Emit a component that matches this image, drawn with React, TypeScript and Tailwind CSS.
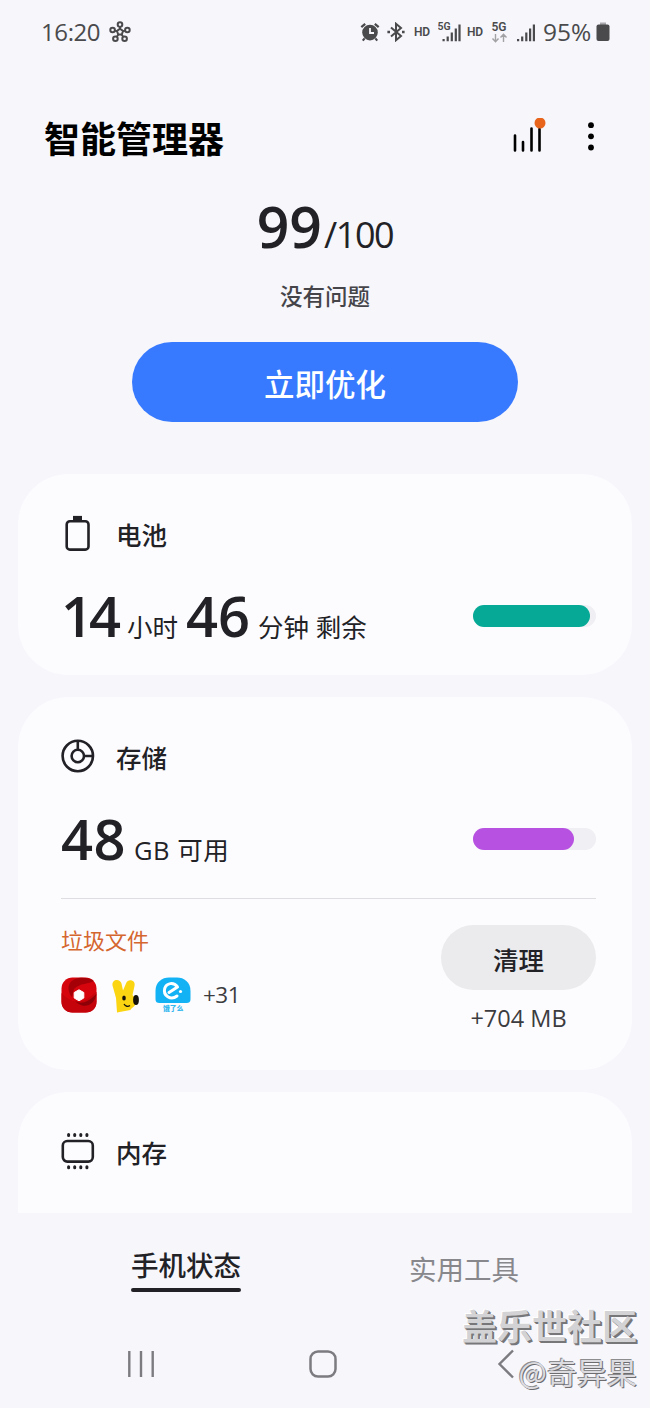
import type { ReactNode } from "react";

function StatusBar() {
  return (
    <div className="flex h-16 items-center pl-[41px] text-[#4a4a4c]">
      <span className="w-[60px] text-[24px] leading-none tracking-[-0.4px]">16:20</span>
      <svg className="ml-2 h-[22px] w-[22px]" viewBox="0 0 22 22" fill="none" stroke="currentColor" strokeWidth="2">
        <path d="M11 7.800l3 2.200-1.200 3.600H9.200L8 10z" />
        <circle cx="11" cy="3.600" r="2.300" />
        <circle cx="3.600" cy="9" r="2.300" />
        <circle cx="18.400" cy="9" r="2.300" />
        <circle cx="6.400" cy="17.800" r="2.300" />
        <circle cx="15.600" cy="17.800" r="2.300" />
        <path d="M11 5.500v2.500M5.500 9.600l3 .8M16.500 9.600l-3 .8M7.600 16l1.800-2.500M14.400 16l-1.800-2.500" />
      </svg>
      <svg className="ml-[229px] h-[20px] w-[20px]" viewBox="0 0 20 20" fill="none">
        <circle cx="10" cy="10.600" r="7.800" fill="currentColor" />
        <path d="M10 6v5h4" stroke="#f6f6fb" strokeWidth="1.800" />
        <path d="M1.300 5.200 5.200 1.800M18.700 5.200 14.800 1.800M4.600 16.400l-1.800 2.200M15.400 16.400l1.800 2.200" stroke="currentColor" strokeWidth="2.200" />
      </svg>
      <svg className="ml-[7px] h-[20px] w-[18px]" viewBox="0 0 18 20" fill="none" stroke="currentColor" strokeWidth="2">
        <path d="M4 5.400l10 8.600-5 4.200V1.800l5 4.200-10 8.600" />
        <path d="M.4 10h2.600M15 10h2.600" strokeWidth="2.600" />
      </svg>
      <span className="ml-[9px] w-[17px] font-[Roboto,sans-serif] text-[12px] leading-none font-semibold tracking-[-0.3px]">HD</span>
      <svg className="ml-[7px] h-[24px] w-[24px] font-[Roboto,sans-serif]" viewBox="0 0 24 24" fill="currentColor">
        <text x="-0.500" y="9.500" fontSize="10.500" fontWeight="600">5G</text>
        <path d="M4.500 19H6.700v2.300H4.500zM8.600 16.500h2.200v4.800H8.600zM12.700 12.500h2.200v8.800h-2.200zM16.700 8.500h2.200v12.800h-2.200zM20.400 4.500h2.200v16.800h-2.200z" />
      </svg>
      <span className="ml-[5px] w-[17px] font-[Roboto,sans-serif] text-[12px] leading-none font-semibold tracking-[-0.3px]">HD</span>
      <svg className="ml-[7px] h-[24px] w-[17px] font-[Roboto,sans-serif]" viewBox="0 0 17 24" fill="currentColor">
        <text x="0.500" y="11" fontSize="12" fontWeight="600">5G</text>
        <path d="M4.500 14v7.500M1.500 18.500l3 3.200 3-3.200M12.500 22v-7.500M9.500 17.500l3-3.200 3 3.200" fill="none" stroke="#a2a2a5" strokeWidth="1.400" />
      </svg>
      <svg className="ml-[9px] h-[24px] w-[19px]" viewBox="0 0 19 24" fill="currentColor">
        <path d="M0 19h2.200v2.300H0zM4.100 16.500h2.200v4.800H4.100zM8.200 12.500h2.200v8.800H8.200zM12 8.500h2.200v12.800H12zM15.800 4.500H18v16.800h-2.200z" />
      </svg>
      <span className="ml-[7px] w-[49px] text-[24.500px] leading-none">95%</span>
      <svg className="ml-[4px] h-[20px] w-[14px]" viewBox="0 0 14 20" fill="currentColor">
        <path d="M4 .5h6v3H4z" fill="#a9a9ac" />
        <rect x="0.500" y="2.500" width="13" height="16.500" rx="2" />
      </svg>
    </div>
  );
}

function Header() {
  return (
    <div className="mt-[42px] flex h-16 items-center pl-11 text-black">
      <h1 className="w-[181px] pt-[3px] text-[36px] leading-none font-bold whitespace-nowrap">智能管理器</h1>
      <svg className="ml-[285px] h-10 w-10" viewBox="0 0 40 40" fill="none">
        <path d="M5 17.500v15M13 24v8.500M21.500 10.500v22M29.500 11v21.500" stroke="currentColor" strokeWidth="2.600" strokeLinecap="round" />
        <circle cx="30" cy="5" r="5.500" fill="#e8641b" />
      </svg>
      <svg className="ml-[37px] h-8 w-2" viewBox="0 0 8 32" fill="currentColor">
        <circle cx="4" cy="3.200" r="2.900" />
        <circle cx="4" cy="14.300" r="2.900" />
        <circle cx="4" cy="25.500" r="2.900" />
      </svg>
    </div>
  );
}

function Score() {
  return (
    <div className="flex flex-col items-center text-[#222226]">
      <div className="mt-[28px] flex h-[56px] items-baseline">
        <span className="text-[57px] leading-[56px] font-semibold">99</span>
        <span className="ml-[2px] text-[36px] leading-none tracking-[-1.4px]">/100</span>
      </div>
      <p className="mt-[27px] text-[22.500px] leading-8 font-medium text-[#454549]">没有问题</p>
      <button className="mt-[29px] h-[80px] w-[386px] rounded-full bg-[#387aff] pt-[5px] text-[30.500px] leading-none font-medium text-white">
        立即优化
      </button>
    </div>
  );
}

function CardTitle({ icon, children }: { icon: ReactNode; children: ReactNode }) {
  return (
    <div className="flex h-10 items-center">
      <div className="w-[55px]">{icon}</div>
      <h2 className="pt-[6px] text-[25.500px] leading-none font-medium">{children}</h2>
    </div>
  );
}

function Meter({ value, color }: { value: number; color: string }) {
  return (
    <div className="ml-auto h-[22px] w-[123px] rounded-full bg-[#f0f0f4]">
      <div className={`h-full rounded-full ${color}`} style={{ width: `${value}%` }} />
    </div>
  );
}

const BatteryIcon = () => (
  <svg className="h-9 w-[34px]" viewBox="0 0 34 36" fill="none">
    <rect x="5.700" y="6.200" width="21.800" height="28.400" rx="3.200" stroke="currentColor" strokeWidth="2.600" />
    <path d="M12 .9h9v5h-9z" fill="currentColor" />
  </svg>
);

const StorageIcon = () => (
  <svg className="h-[34px] w-[34px]" viewBox="0 0 34 34" fill="none" stroke="currentColor" strokeWidth="2.600">
    <circle cx="16.800" cy="17" r="15.200" />
    <circle cx="16.800" cy="17" r="6.200" />
    <path d="M16.800 2v9M23 17h9" />
  </svg>
);

const MemoryIcon = () => (
  <svg className="h-[38px] w-[34px]" viewBox="0 0 34 38" fill="none" stroke="currentColor" strokeLinecap="round">
    <rect x="1.800" y="9" width="30" height="20.600" rx="4.500" strokeWidth="2.600" />
    <path d="M7.600 2.500v1M13.700 2.500v1M19.800 2.500v1M25.900 2.500v1M7.600 34.800v1M13.700 34.800v1M19.800 34.800v1M25.900 34.800v1" strokeWidth="3" />
  </svg>
);

const RedApp = () => (
  <svg className="h-9 w-9" viewBox="0 0 36 36">
    <rect x="0.500" y="0.500" width="35" height="35" rx="11" fill="#d6050d" />
    <path d="M.5 16C8 24 16 27 24 23c5-2 9-7 11.500-8v10c0 6-4 10.500-10.500 10.500H11C5 35.500.5 31 .5 25z" fill="#c4030b" />
    <path d="M11 20c4 8 14 8 24.500-3C33 30 20 34 11 20z" fill="#8e0007" />
    <path d="M13 12C19 6 28 7 33 4c-8-5-20-4-24 2-3 5-1 11 2 14z" fill="#a50008" />
    <path d="M18 12.800l4.800 2.700v5.500L18 23.800l-4.800-2.800v-5.500z" fill="#fff" stroke="#fff" strokeLinejoin="round" />
  </svg>
);

const RabbitApp = () => (
  <svg className="h-9 w-9" viewBox="0 0 36 36">
    <path d="M4.500 8.500C3.500 2 12 1 13.500 6.500l1.500 7 3-7c2-5.500 10-3.500 8.500 2.500L24.500 18c3 3 4 6 3 9-1 3-4.500 4-5 6L9 35.500 8 21z" fill="#fbd511" />
    <ellipse cx="16" cy="21" rx="1.800" ry="2.500" fill="#15120c" />
    <ellipse cx="28" cy="23" rx="2.900" ry="5" fill="#15120c" />
    <path d="M16 27c1.500 2.500 4 3 6 1.500" fill="none" stroke="#15120c" strokeWidth="1.300" />
  </svg>
);

const ElemeApp = () => (
  <svg className="h-9 w-9" viewBox="0 0 36 36">
    <path d="M.5 22V14C.5 5 7 .5 14 .5h8c7 0 13.500 4.500 13.500 13.500v8c0 3-1.500 4-4 4h-27c-2.500 0-4-1-4-4z" fill="#12b2f5" />
    <path d="M14 15.500l8.500-5.500c-4-5.500-11-4-12.800 1.500-1.800 7 6 12.500 12.300 7.500" fill="none" stroke="#fff" strokeWidth="3" strokeLinejoin="round" strokeLinecap="round" />
    <circle cx="25.500" cy="14.500" r="1.600" fill="#fff" />
    <text x="8" y="33.500" fontSize="6.800" fontWeight="900" fill="#35b8ee">饿了么</text>
  </svg>
);

function Cards() {
  return (
    <main className="mx-[18px] mt-[52px] flex h-[739px] flex-col gap-[22px] overflow-hidden text-[#222226]">
      <section className="h-[201px] shrink-0 rounded-[50px] bg-[#fcfcff] pt-[39px] pr-[36px] pl-[43px]">
        <CardTitle icon={<BatteryIcon />}>电池</CardTitle>
        <div className="mt-[33px] flex h-[60px] items-center">
          <p className="flex items-baseline pt-[10px] text-[25.500px] leading-[60px] whitespace-nowrap">
            <span className="w-[58px] text-[56px] font-semibold tracking-[-4px]">14</span>
            <span className="ml-[8px]">小时</span>
            <span className="ml-[8px] w-[64px] text-[56px] font-semibold">46</span>
            <span className="ml-[8px]">分钟 剩余</span>
          </p>
          <Meter value={95.5} color="bg-[#05a996]" />
        </div>
      </section>

      <section className="h-[373px] shrink-0 rounded-[50px] bg-[#fcfcff] pt-[39px] pr-[36px] pl-[43px]">
        <CardTitle icon={<StorageIcon />}>存储</CardTitle>
        <div className="mt-[33px] flex h-[60px] items-center">
          <p className="flex items-baseline pt-[10px] text-[25.500px] leading-[60px] whitespace-nowrap">
            <span className="w-[64px] text-[56px] font-semibold tracking-[0.5px]">48</span>
            <span className="ml-[9px] tracking-[0.5px]">GB 可用</span>
          </p>
          <Meter value={82.5} color="bg-[#b751e1]" />
        </div>
        <div className="mt-[29px] h-px bg-[#dedee2]" />
        <div className="flex justify-between pt-[26px]">
          <div>
            <p className="mt-[2px] text-[22px] leading-[26px] text-[#d5662f]">垃圾文件</p>
            <div className="mt-[24px] flex items-center gap-[11px]">
              <RedApp />
              <RabbitApp />
              <ElemeApp />
              <span className="pl-px text-[22.500px] leading-none tracking-[-0.5px] text-[#3c3c40]">+31</span>
            </div>
          </div>
          <div className="flex flex-col items-center">
            <button className="h-[65px] w-[155px] rounded-full bg-[#ebebee] pt-[6px] text-[25.500px] leading-none font-medium">清理</button>
            <span className="mt-[14px] text-[23.500px] leading-7 text-[#3c3c40]">+704 MB</span>
          </div>
        </div>
      </section>

      <section className="h-[201px] shrink-0 rounded-[50px] bg-[#fcfcff] pt-[39px] pr-[36px] pl-[43px]">
        <CardTitle icon={<MemoryIcon />}>内存</CardTitle>
      </section>
    </main>
  );
}

function BottomTabs() {
  return (
    <div className="flex h-[96px] items-start pt-[35px] pl-[131px] text-[27.500px] leading-9">
      <div className="flex w-[110px] flex-col">
        <span className="h-10 font-medium whitespace-nowrap text-[#222226]">手机状态</span>
        <span className="h-1 rounded-full bg-[#222226]" />
      </div>
      <div className="ml-[168px] pt-[4px] text-[#88888c]">实用工具</div>
    </div>
  );
}

function NavBar() {
  return (
    <div className="mt-[39px] flex h-8 items-center pl-[127px] text-[#7c7c80]">
      <svg className="h-8 w-7" viewBox="0 0 28 32" stroke="currentColor" strokeWidth="2.400">
        <path d="M2.300 3v26M14 3v26M25.700 3v26" />
      </svg>
      <svg className="ml-[152px] h-8 w-8" viewBox="0 0 32 32" fill="none" stroke="currentColor" strokeWidth="2.500">
        <rect x="3.500" y="3.500" width="25" height="25" rx="7.500" />
      </svg>
      <svg className="ml-[157px] h-8 w-5" viewBox="0 0 20 32" fill="none" stroke="currentColor" strokeWidth="2.400">
        <path d="M17 2.500 3.500 16 17 29.500" />
      </svg>
    </div>
  );
}

function Watermark() {
  return (
    <div className="absolute right-[13px] bottom-[15px] flex flex-col items-end font-['Noto_Sans_CJK_SC',sans-serif] whitespace-nowrap">
      <span className="text-[35px] leading-[48px] font-bold text-[#d3d3d6] [text-shadow:1px_1px_0_#77777a,2px_2px_0_#77777a,-1px_-1px_0_#ffffff]">
        盖乐世社区
      </span>
      <span className="text-[30px] leading-[44px] text-[#dcdce0] [text-shadow:1px_1px_0_#6d6d70,-1px_-1px_0_#8d8d90]">@奇异果</span>
    </div>
  );
}

export default function App() {
  return (
    <div className="relative h-[1408px] w-[650px] overflow-hidden bg-[#f6f6fb] font-['Open_Sans','Noto_Sans_CJK_SC',sans-serif]">
      <StatusBar />
      <Header />
      <Score />
      <Cards />
      <BottomTabs />
      <NavBar />
      <Watermark />
    </div>
  );
}
